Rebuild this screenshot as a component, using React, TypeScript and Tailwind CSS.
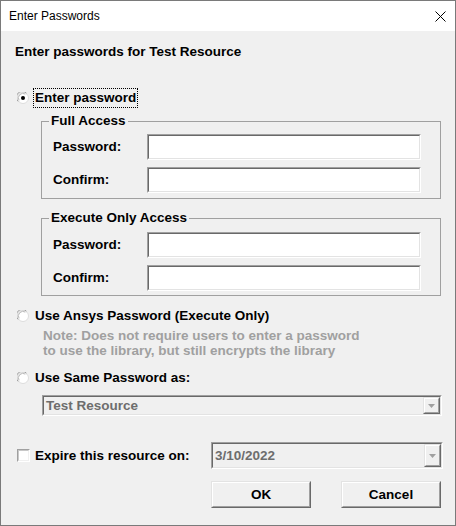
import React from "react";

/* sunken edit box, classic win32 look */
const Edit: React.FC<{ className?: string; children?: React.ReactNode }> = ({
  className = "",
  children,
}) => (
  <div
    className={`border border-t-[#a0a0a0] border-l-[#a0a0a0] border-b-white border-r-white ${className}`}
  >
    <div className="h-full border border-t-[#696969] border-l-[#696969] border-b-[#e3e3e3] border-r-[#e3e3e3] bg-white">
      {children}
    </div>
  </div>
);

const DropArrow: React.FC = () => (
  <div className="w-[17px] h-full border border-t-[#e3e3e3] border-l-[#e3e3e3] border-b-[#696969] border-r-[#696969] bg-[#f0f0f0]">
    <div className="h-full flex items-center justify-center border border-t-white border-l-white border-b-[#a0a0a0] border-r-[#a0a0a0]">
      <svg width="7" height="4" viewBox="0 0 7 4">
        <path d="M0 0h7L3.5 4z" fill="#a0a0a0" />
      </svg>
    </div>
  </div>
);

const Combo: React.FC<{ text: string; className?: string }> = ({ text, className = "" }) => (
  <div
    className={`border border-t-[#a0a0a0] border-l-[#a0a0a0] border-b-white border-r-white ${className}`}
  >
    <div className="h-full flex items-center border border-t-[#696969] border-l-[#696969] border-b-[#e3e3e3] border-r-[#e3e3e3] bg-[#f0f0f0]">
      <span className="flex-1 pl-[2px] text-[#6d6d6d]">{text}</span>
      <DropArrow />
    </div>
  </div>
);

const Radio: React.FC<{ checked?: boolean }> = ({ checked }) => (
  <svg width="12" height="12" viewBox="0 0 12 12" className="shrink-0">
    <circle cx="6" cy="6" r="5.5" fill="#fff" stroke="#dcdcdc" />
    <path d="M1.1 9.4A5.5 5.5 0 0 1 9.4 1.1" fill="none" stroke="#a0a0a0" strokeWidth="1" />
    <path d="M2.1 8.3A4.5 4.5 0 0 1 8.3 2.1" fill="none" stroke="#b8b8b8" strokeWidth="1" />
    {checked && <circle cx="6" cy="6" r="2" fill="#000" />}
  </svg>
);

const Checkbox: React.FC = () => (
  <div className="w-[13px] h-[13px] shrink-0 border border-t-[#a0a0a0] border-l-[#a0a0a0] border-b-white border-r-white">
    <div className="h-full border border-t-[#c8c8c8] border-l-[#c8c8c8] border-b-[#f0f0f0] border-r-[#f0f0f0] bg-white" />
  </div>
);

const Button: React.FC<{ label: string }> = ({ label }) => (
  <div className="w-[100px] h-[27px] border border-t-[#e3e3e3] border-l-[#e3e3e3] border-b-[#696969] border-r-[#696969]">
    <div className="h-full flex items-center justify-center border border-t-white border-l-white border-b-[#a0a0a0] border-r-[#a0a0a0] bg-[#f0f0f0]">
      {label}
    </div>
  </div>
);

const PwRows: React.FC = () => (
  <>
    <div className="flex items-center h-[26px]">
      <span className="w-[105px] pl-[11px]">Password:</span>
      <Edit className="w-[274px] h-[26px]" />
    </div>
    <div className="flex items-center h-[26px] mt-[7px]">
      <span className="w-[105px] pl-[11px]">Confirm:</span>
      <Edit className="w-[274px] h-[26px]" />
    </div>
  </>
);

export default function App() {
  return (
    <div className="w-[456px] h-[526px] flex flex-col border border-[#7a7a7a] bg-[#f0f0f0] font-['Liberation_Sans',Arial,sans-serif]">
      {/* title bar */}
      <div className="h-[30px] shrink-0 bg-white flex items-center justify-between pl-[8px] pr-[9px]">
        <span className="text-[12px] text-black">Enter Passwords</span>
        <svg width="11" height="11" viewBox="0 0 11 11">
          <path d="M0.5 0.5l10 10M10.5 0.5l-10 10" stroke="#000" strokeWidth="1" />
        </svg>
      </div>

      <div className="flex-1 pl-[14px] text-[13.5px] leading-[16px] font-bold text-black">
        <div className="mt-[13px]">Enter passwords for Test Resource</div>

        <div className="mt-[28px] flex items-center h-[20px] ml-[2px]">
          <Radio checked />
          <span className="ml-[4px] px-[1px] h-[20px] flex items-center border border-dotted border-black">
            Enter password
          </span>
        </div>

        <fieldset className="ml-[26px] mt-[5px] w-[400px] border border-[#a0a0a0] pb-[5px]">
          <legend className="ml-[7px] px-[2px]">Full Access</legend>
          <div className="mt-[5px]">
            <PwRows />
          </div>
        </fieldset>

        <fieldset className="ml-[26px] mt-[11px] w-[400px] border border-[#a0a0a0] pb-[4px]">
          <legend className="ml-[7px] px-[2px]">Execute Only Access</legend>
          <div className="mt-[6px]">
            <PwRows />
          </div>
        </fieldset>

        <div className="mt-[12px] flex items-center h-[16px] ml-[2px]">
          <Radio />
          <span className="ml-[6px]">Use Ansys Password (Execute Only)</span>
        </div>
        <div className="mt-[4px] ml-[28px] leading-[15px] text-[#a0a0a0]">
          Note: Does not require users to enter a password
          <br />
          to use the library, but still encrypts the library
        </div>

        <div className="mt-[12px] flex items-center h-[16px] ml-[2px]">
          <Radio />
          <span className="ml-[6px]">Use Same Password as:</span>
        </div>

        <Combo text="Test Resource" className="mt-[9px] ml-[27px] w-[400px] h-[21px]" />

        <div className="mt-[26px] flex items-center h-[27px]">
          <div className="w-[194px] flex items-center ml-[2px]">
            <Checkbox />
            <span className="ml-[5px]">Expire this resource on:</span>
          </div>
          <Combo text="3/10/2022" className="w-[232px] h-[27px]" />
        </div>

        <div className="mt-[12px] flex">
          <div className="ml-[196px]">
            <Button label="OK" />
          </div>
          <div className="ml-[30px]">
            <Button label="Cancel" />
          </div>
        </div>
      </div>
    </div>
  );
}
